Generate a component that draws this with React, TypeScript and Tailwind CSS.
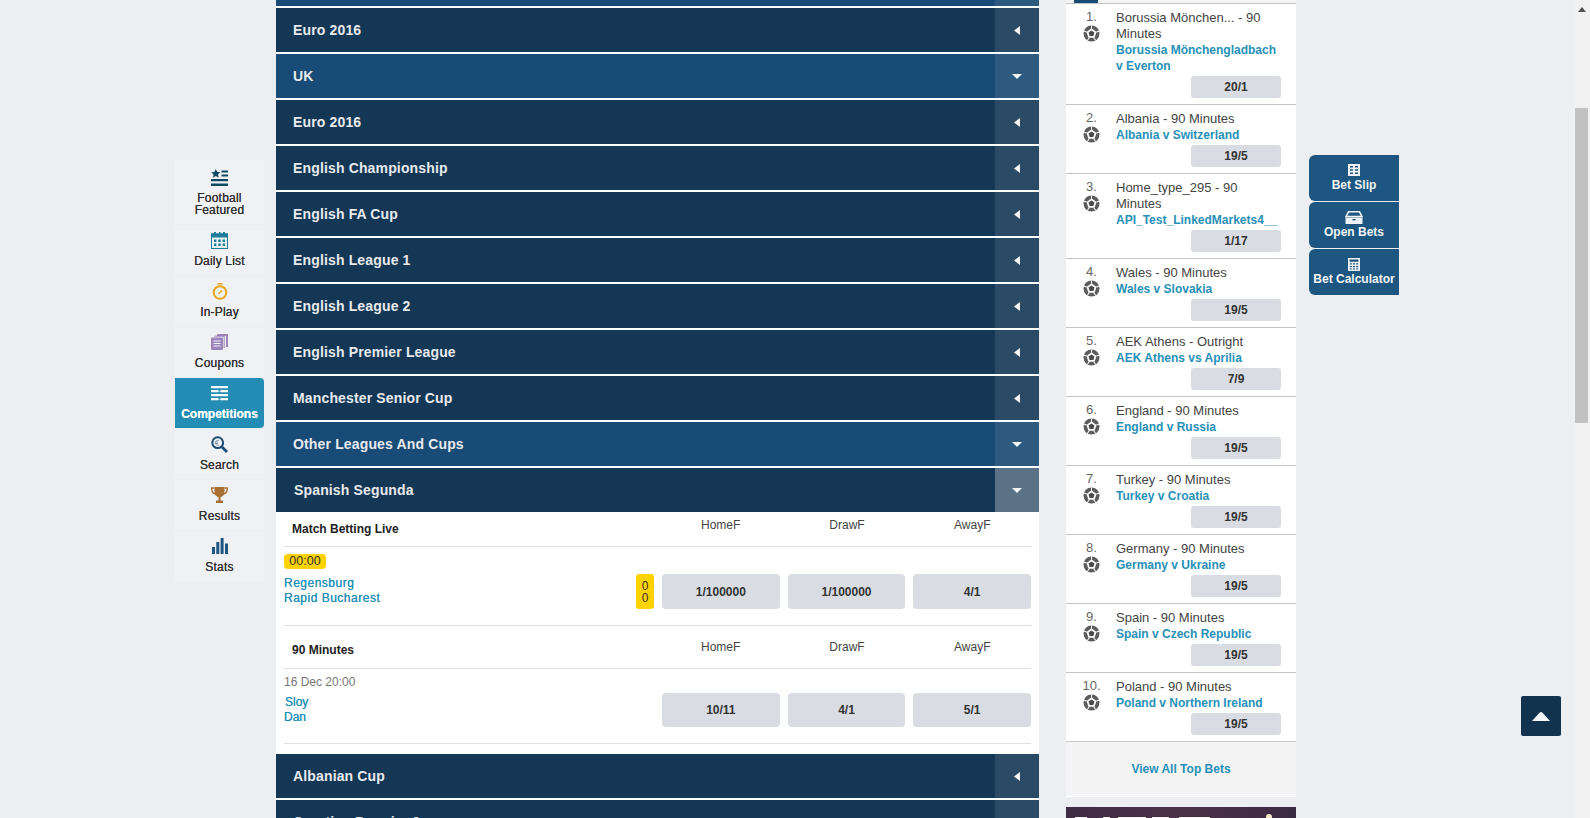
import type { ReactNode } from 'react';

const FONT = "font-['Liberation_Sans',Arial,sans-serif]";

function Caret({ open }: { open: boolean }) {
  return open ? (
    <svg width="10" height="5" viewBox="0 0 10 5"><path d="M0 0h10L5 5z" fill="#f4f5f7" /></svg>
  ) : (
    <svg width="6" height="9" viewBox="0 0 6 9"><path d="M6 0v9L0 4.500z" fill="#f4f5f7" /></svg>
  );
}

function LeagueRow({ label, light, open, active }: { label: string; light?: boolean; open?: boolean; active?: boolean }) {
  const bar = light ? 'bg-[#184b75]' : 'bg-[#143755]';
  const box = active ? 'bg-[#5a7186]' : light ? 'bg-[#2f5a80]' : 'bg-[#2b4a66]';
  return (
    <div className={`flex h-11 shrink-0 items-center ${bar}`}>
      <span className={`flex-1 text-[14px] font-bold text-[#e8eaee] ${active ? 'pl-[18px] tracking-[0.15px]' : 'pl-[17px] tracking-[0.15px]'}`}>
        {label}
      </span>
      <span className={`flex h-11 w-11 items-center justify-center ${box}`}>
        <Caret open={!!open} />
      </span>
    </div>
  );
}

function OddsButton({ value }: { value: string }) {
  return (
    <div className="flex h-full flex-1 items-center justify-center rounded-[4px] bg-[#d9dde3] text-[12px] font-bold text-[#333]">
      {value}
    </div>
  );
}

// the two market headers differ in height, so padding comes in by prop
function MarketHeader({ title, tall }: { title: string; tall?: boolean }) {
  return (
    <div className={`mx-2 flex border-b border-[#dfdfdf] ${tall ? 'h-[43px]' : 'h-[35px]'}`}>
      <span className={`w-[378px] pl-2 text-[12px] font-bold text-[#222] ${tall ? 'pt-[15px]' : 'pt-2'}`}>{title}</span>
      <div className={`flex flex-1 gap-2 text-[12px] text-[#444] ${tall ? 'pt-3' : 'pt-1'}`}>
        <span className="flex-1 text-center">HomeF</span>
        <span className="flex-1 pl-[1px] text-center">DrawF</span>
        <span className="flex-1 text-center">AwayF</span>
      </div>
    </div>
  );
}

function SoccerBall() {
  return (
    <svg width="17" height="17" viewBox="0 0 17 17">
      <circle cx="8.500" cy="8.500" r="8" fill="#5c5c5c" />
      <path d="M8.500 3.200l5 3.700-1.900 5.900H5.400L3.500 6.900z" fill="#fff" />
      <path d="M8.500 5.400l3 2.200-1.150 3.500H6.650L5.500 7.600z" fill="#4a4a4a" />
      <path d="M8 .4h1v3.200H8zM13.200 6.400l3-1 .4 1-3 1zM11.100 12.400l1.900 2.600-.9.600-1.800-2.600zM5.900 12.400l.8.600-1.800 2.600-.9-.6zM3.800 6.400l-.4 1-3-1 .4-1z" fill="#fff" />
    </svg>
  );
}

type TopBet = { title: string; match: string; odds: string };

function TopBetRow({ rank, bet }: { rank: number; bet: TopBet }) {
  return (
    <div className="flex border-b border-[#c4c4c4] pt-[5px] pb-[6px]">
      <div className="flex w-[50px] shrink-0 flex-col items-center text-[13px] leading-4 text-[#666]">
        <span className="pl-[1px]">{rank}.</span>
        <SoccerBall />
      </div>
      <div className="min-w-0 flex-1 pr-[15px]">
        <div className="relative top-[1px] text-[13px] leading-4 text-[#444]">{bet.title}</div>
        <div className="relative top-[1px] text-[12px] leading-4 font-bold text-[#2790b8]">{bet.match}</div>
        <div className="mt-[3px] ml-[75px] flex h-[22px] items-center justify-center rounded-[3px] bg-[#d9dde3] text-[12px] font-bold text-[#333]">
          {bet.odds}
        </div>
      </div>
    </div>
  );
}

function NavItem({ icon, label, active, tall }: { icon: ReactNode; label: ReactNode; active?: boolean; tall?: boolean }) {
  return (
    <div
      className={`mb-[1px] flex flex-col items-center text-center text-[12px] leading-3 ${
        tall ? 'h-[64px] pt-[6px]' : 'h-[50px] pt-1'
      } ${active ? 'rounded-r-[4px] bg-[#238db6] font-bold text-white' : 'bg-[#f0f1f4] tracking-[0.2px] text-[#333]'}`}
    >
      <div className="flex h-[22px] items-center justify-center">{icon}</div>
      <div className="mt-1 [text-shadow:0_0_0.6px_currentColor]">{label}</div>
    </div>
  );
}

const navIcons = {
  featured: (
    <svg width="17" height="17" viewBox="0 0 17 17" fill="#0f4a63">
      <path d="M4.800 0l1.400 3 3.200.3-2.400 2.200.7 3.200-2.900-1.700-2.900 1.700.7-3.200L.2 3.300 3.400 3z" />
      <path d="M10.500 1.500H17v2h-6.500zM10.500 5.500H17v2h-6.500zM0 10h17v2.200H0zM0 14.500h17V17H0z" />
    </svg>
  ),
  daily: (
    <svg width="17" height="17" viewBox="0 0 17 17">
      <rect x=".5" y="2" width="16" height="14.500" fill="#e9f3f6" stroke="#1d7c97" />
      <rect x="0" y="1.500" width="17" height="4" fill="#1d7c97" />
      <path d="M3 0h2v3H3zM8 0h1.500v3H8zM12 0h2v3h-2z" fill="#1d7c97" />
      <path d="M3 7.500h2.400v2.400H3zM7.300 7.500h2.400v2.400H7.300zM11.600 7.500H14v2.400h-2.400zM3 11.600h2.400V14H3zM7.300 11.600h2.400V14H7.300zM11.600 11.600H14V14h-2.400z" fill="#1d7c97" />
    </svg>
  ),
  inplay: (
    <svg width="16" height="17" viewBox="0 0 16 17" fill="none" stroke="#e8a51c">
      <circle cx="8" cy="9.500" r="6.300" strokeWidth="2" />
      <path d="M5.500 0.800h5" strokeWidth="1.600" />
      <path d="M6.500 11l3.500-3.500" strokeWidth="1.600" />
    </svg>
  ),
  coupons: (
    <svg width="17" height="16" viewBox="0 0 17 16">
      <path d="M6 0h11v13h-2V2H6z" fill="#9d84bb" />
      <path d="M3.500 1.500H14V14h-1.500V3h-9z" fill="#9d84bb" opacity=".75" />
      <rect x="0" y="3.500" width="12" height="12.500" rx="1" fill="#9d84bb" />
      <path d="M2.500 6.500h7v1h-7zM2.500 9h7v1h-7zM2.500 11.500h7v1h-7z" fill="#f0f1f4" />
    </svg>
  ),
  competitions: (
    <svg width="17" height="15" viewBox="0 0 17 15" fill="#fff">
      <path d="M0 0h17v2.200H0zM0 4h7.500v2.200H0zM9.500 4H17v2.200H9.500zM0 8h17v2.200H0zM0 12h7.500v2.200H0zM9.500 12H17v2.200H9.500z" />
      <path d="M7.500 5h2v.6h-2zM7.500 13h2v.6h-2z" />
    </svg>
  ),
  search: (
    <svg width="17" height="17" viewBox="0 0 17 17" fill="none">
      <circle cx="6.700" cy="6.700" r="5.400" stroke="#194a75" strokeWidth="2" />
      <path d="M11 11l5 5" stroke="#194a75" strokeWidth="2.600" />
      <path d="M8 4.600a2.400 2.400 0 1 0 0 4.200M4 6h3M4 7.500h3" stroke="#6d8aa5" strokeWidth=".8" />
    </svg>
  ),
  results: (
    <svg width="17" height="17" viewBox="0 0 17 17">
      <path d="M3.500 0h10v5c0 3-2 5.200-5 5.200s-5-2.200-5-5.200z" fill="#a96f32" />
      <path d="M3.500 1H.6c0 3.400 1.400 5.400 4 6M13.500 1h2.900c0 3.400-1.400 5.400-4 6" fill="none" stroke="#a96f32" strokeWidth="1.300" />
      <path d="M7.500 10h2v3.500h-2zM5 13.500h7V16H5z" fill="#a96f32" />
    </svg>
  ),
  stats: (
    <svg width="16" height="16" viewBox="0 0 16 16" fill="#1d5781">
      <rect x="0" y="9" width="3" height="7" />
      <rect x="4.300" y="4" width="3" height="12" />
      <rect x="8.600" y="0" width="3" height="16" />
      <rect x="13" y="5.500" width="3" height="10.500" />
    </svg>
  ),
};

const floatIcons = {
  slip: (
    <svg width="12" height="12" viewBox="0 0 12 12" fill="#eef2f6">
      <path d="M0 0h12v12H0zM2 2v1.500h3V2zm5 0v1.500h3V2zM2 5.200v1.600h3V5.200zm5 0v1.600h3V5.200zM2 8.500V10h3V8.500zm5 0V10h3V8.500z" fillRule="evenodd" />
    </svg>
  ),
  open: (
    <svg width="18" height="13" viewBox="0 0 18 13">
      <path d="M3.500 0.800h11L17 5.500H1z" fill="none" stroke="#eef2f6" strokeWidth="1.600" />
      <path d="M0.500 6.500h17V13H.5z" fill="#eef2f6" />
      <rect x="7.500" y="8" width="3" height="1.400" fill="#1d5781" />
    </svg>
  ),
  calc: (
    <svg width="12" height="13" viewBox="0 0 12 13" fill="#eef2f6">
      <path d="M0 0h12v13H0zM1.500 1.500v2.200h9V1.500zM1.800 5.200v1.300h2V5.200zm3.200 0v1.300h2V5.200zm3.200 0v1.300h2V5.200zM1.800 7.900v1.300h2V7.900zm3.200 0v1.300h2V7.900zm3.200 0v1.300h2V7.900zM1.800 10.400v1.200h2v-1.200zm3.200 0v1.200h2v-1.200zm3.200 0v1.200h2v-1.200z" fillRule="evenodd" />
    </svg>
  ),
};

const leaguesBefore: { label: string; light?: boolean; open?: boolean }[] = [
  { label: 'Euro 2016' },
  { label: 'UK', light: true, open: true },
  { label: 'Euro 2016' },
  { label: 'English Championship' },
  { label: 'English FA Cup' },
  { label: 'English League 1' },
  { label: 'English League 2' },
  { label: 'English Premier League' },
  { label: 'Manchester Senior Cup' },
  { label: 'Other Leagues And Cups', light: true, open: true },
];

const topBets: TopBet[] = [
  { title: 'Borussia Mönchen... - 90 Minutes', match: 'Borussia Mönchengladbach v Everton', odds: '20/1' },
  { title: 'Albania - 90 Minutes', match: 'Albania v Switzerland', odds: '19/5' },
  { title: 'Home_type_295 - 90 Minutes', match: 'API_Test_LinkedMarkets4__', odds: '1/17' },
  { title: 'Wales - 90 Minutes', match: 'Wales v Slovakia', odds: '19/5' },
  { title: 'AEK Athens - Outright', match: 'AEK Athens vs Aprilia', odds: '7/9' },
  { title: 'England - 90 Minutes', match: 'England v Russia', odds: '19/5' },
  { title: 'Turkey - 90 Minutes', match: 'Turkey v Croatia', odds: '19/5' },
  { title: 'Germany - 90 Minutes', match: 'Germany v Ukraine', odds: '19/5' },
  { title: 'Spain - 90 Minutes', match: 'Spain v Czech Republic', odds: '19/5' },
  { title: 'Poland - 90 Minutes', match: 'Poland v Northern Ireland', odds: '19/5' },
];

export default function App() {
  return (
    <div className={`relative flex h-[818px] w-[1590px] overflow-hidden bg-[#edeef2] ${FONT}`}>
      {/* left nav */}
      <nav className="mt-[160px] ml-[175px] w-[89px] shrink-0">
        <NavItem tall icon={navIcons.featured} label={<>Football<br />Featured</>} />
        <NavItem icon={navIcons.daily} label="Daily List" />
        <NavItem icon={navIcons.inplay} label="In-Play" />
        <NavItem icon={navIcons.coupons} label="Coupons" />
        <NavItem active icon={navIcons.competitions} label="Competitions" />
        <NavItem icon={navIcons.search} label="Search" />
        <NavItem icon={navIcons.results} label="Results" />
        <NavItem icon={navIcons.stats} label="Stats" />
      </nav>

      {/* leagues */}
      <main className="ml-3 flex w-[763px] shrink-0 flex-col gap-[2px] bg-white">
        <div className="flex h-[6px] shrink-0 bg-[#184b75]">
          <div className="flex-1" />
          <div className="w-11 bg-[#2f5a80]" />
        </div>
        {leaguesBefore.map((l, i) => (
          <LeagueRow key={i} {...l} />
        ))}
        <LeagueRow label="Spanish Segunda" open active />

        <div className="-mt-[2px] h-[240px] shrink-0">
          <MarketHeader title="Match Betting Live" />
          <div className="mx-2 h-[79px] border-b border-[#dfdfdf] pt-[7px]">
            <div className="flex h-[15px] w-[42px] items-center justify-center rounded-[4px] bg-[#ffd200] text-[12.5px] text-[#333]">00:00</div>
            <div className="mt-[5px] flex h-[35px] items-center">
              <div className="w-[352px] pb-[2px] text-[12px] leading-[15px] tracking-[0.5px] text-[#2790b8] [text-shadow:0_0_0.4px_currentColor]">
                Regensburg
                <br />
                Rapid Bucharest
              </div>
              <div className="flex h-full w-[18px] flex-col items-center justify-center rounded-[3px] bg-[#ffd200] text-[12px] leading-3 text-[#333]">
                <span>0</span>
                <span>0</span>
              </div>
              <div className="ml-2 flex h-full flex-1 gap-2">
                <OddsButton value="1/100000" />
                <OddsButton value="1/100000" />
                <OddsButton value="4/1" />
              </div>
            </div>
          </div>
          <MarketHeader tall title="90 Minutes" />
          <div className="mx-2 h-[75px] border-b border-[#dfdfdf] pt-[6px]">
            <div className="text-[12px] leading-[15px] text-[#777]">16 Dec 20:00</div>
            <div className="mt-[3px] flex h-[34px] items-center">
              <div className="w-[378px] text-[12px] leading-[15px] text-[#2790b8] [text-shadow:0_0_0.6px_currentColor]">
                <span className="pl-[1px]">Sloy</span>
                <br />
                Dan
              </div>
              <div className="flex h-full flex-1 gap-2">
                <OddsButton value="10/11" />
                <OddsButton value="4/1" />
                <OddsButton value="5/1" />
              </div>
            </div>
          </div>
        </div>

        <LeagueRow label="Albanian Cup" />
        <LeagueRow label="Croatian Premier 2" />
      </main>

      {/* top bets */}
      <aside className="ml-[27px] flex w-[230px] shrink-0 flex-col">
        <div className="h-[4px] shrink-0 border-b border-[#c4c4c4] bg-[#f4f4f4] pl-2">
          <div className="h-[3px] w-6 bg-[#194a75]" />
        </div>
        <div className="bg-white">
          {topBets.map((b, i) => (
            <TopBetRow key={i} rank={i + 1} bet={b} />
          ))}
        </div>
        <div className="flex h-[55px] shrink-0 items-center justify-center border-b border-white bg-[#f4f4f4] text-[12px] font-bold text-[#2790b8]">
          View All Top Bets
        </div>
        {/* banner image, only its first rows are on screen */}
        <div className="mt-[10px] flex-1 bg-gradient-to-r from-[#3e2c45] via-[#4c3249] to-[#3a2a42]">
          <svg width="230" height="11" viewBox="0 0 230 11" fill="#f4f0ee">
            <path d="M9 10h12v1H9zM37 10h7v1h-7zM52 10h28v1H52zM86 10h17v1H86zM113 10h31v1h-31z" />
            <circle cx="203" cy="10" r="3" fill="#f6e7c8" />
          </svg>
        </div>
      </aside>

      {/* bet tools */}
      <div className="mt-[155px] ml-[13px] flex w-[90px] shrink-0 flex-col gap-[1px] self-start text-[12px] font-bold text-[#f2f5f8]">
        <div className="flex h-[46px] flex-col items-center justify-center rounded-l-[6px] bg-[#1d5781]">
          {floatIcons.slip}
          <span className="mt-[2px] leading-[14px]">Bet Slip</span>
        </div>
        <div className="flex h-[46px] flex-col items-center justify-center rounded-l-[6px] bg-[#1d5781]">
          {floatIcons.open}
          <span className="mt-[1px] leading-[14px]">Open Bets</span>
        </div>
        <div className="flex h-[46px] flex-col items-center justify-center rounded-l-[6px] bg-[#1d5781] whitespace-nowrap">
          {floatIcons.calc}
          <span className="mt-[1px] leading-[14px]">Bet Calculator</span>
        </div>
      </div>

      {/* back to top */}
      <div className="absolute top-[696px] left-[1521px] flex h-10 w-10 items-center justify-center rounded-[2px] bg-[#12334f]">
        <svg width="18" height="9" viewBox="0 0 18 9"><path d="M7.500 0.800q1.500-1.400 3 0L18 9H0z" fill="#f7f8fa" /></svg>
      </div>

      {/* page scrollbar */}
      <div className="absolute top-0 right-0 bottom-0 flex w-[17px] flex-col items-center bg-[#f1f1f1]">
        <svg className="mt-[7px]" width="8" height="5" viewBox="0 0 8 5"><path d="M4 0l4 5H0z" fill="#505050" /></svg>
        <div className="mt-[96px] h-[315px] w-[13px] bg-[#c1c1c1]" />
      </div>
    </div>
  );
}
